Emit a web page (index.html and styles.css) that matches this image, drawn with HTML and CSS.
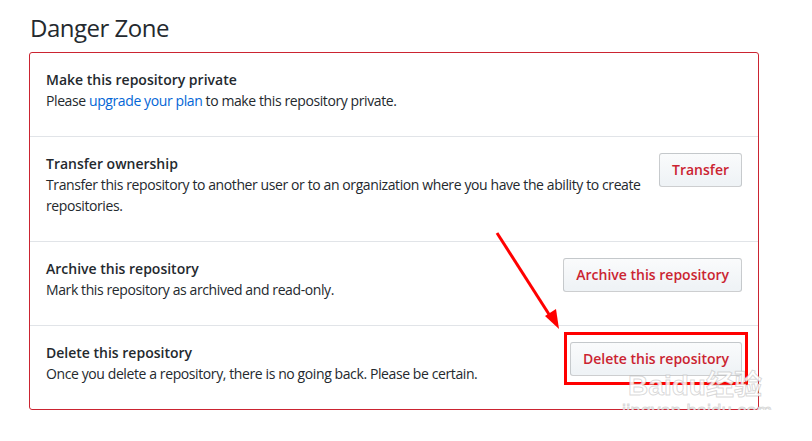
FILE: index.html
```html
<!DOCTYPE html>
<html>
<head>
    <meta charset="utf-8">
    <title>Danger Zone</title>
    <link rel="stylesheet" href="styles.css">
</head>
<body>

    <div class="page">
        <h2 class="subhead">Danger Zone</h2>

        <div class="danger-box">
            <div class="box-row">
                <strong class="row-title">Make this repository private</strong>
                <p class="row-desc">Please <a href="#">upgrade your plan</a> to make this repository private.</p>
            </div>

            <div class="box-row">
                <button class="btn-danger">Transfer</button>
                <strong class="row-title">Transfer ownership</strong>
                <p class="row-desc">Transfer this repository to another user or to an organization where you have the ability to create repositories.</p>
            </div>

            <div class="box-row">
                <button class="btn-danger">Archive this repository</button>
                <strong class="row-title">Archive this repository</strong>
                <p class="row-desc">Mark this repository as archived and read-only.</p>
            </div>

            <div class="box-row">
                <span class="highlight">
                    <button class="btn-danger">Delete this repository</button>
                </span>
                <strong class="row-title">Delete this repository</strong>
                <p class="row-desc">Once you delete a repository, there is no going back. Please be certain.</p>
            </div>
        </div>
    </div>

    <!-- annotation arrow -->
    <svg class="arrow" width="812" height="441" viewBox="0 0 812 441">
        <line x1="497" y1="233" x2="552" y2="319" stroke="#ff0000" stroke-width="3"/>
        <polygon points="559,329 545,316 556,309" fill="#ff0000"/>
    </svg>

    <!-- watermark -->
    <div class="watermark">
        <div class="wm-logo">Baidu经验</div>
        <div class="wm-url">jingyan.baidu.com</div>
    </div>

</body>
</html>
```

FILE: styles.css
```css
* {
    margin: 0;
    padding: 0;
    box-sizing: border-box;
}

body {
    font-family: "Open Sans", "Noto Sans", Arial, sans-serif;
    font-size: 14px;
    line-height: 1.5;
    color: #24292e;
    background: #fff;
    position: relative;
}

.page {
    width: 759px;
    padding: 13px 0 0 29px;
}

.subhead {
    font-size: 24px;
    font-weight: 400;
    line-height: 1.25;
    letter-spacing: -0.5px;
    padding-left: 1px;
    margin-bottom: 9px;
}

.danger-box {
    border: 1px solid #cb2431;
    border-radius: 3px;
}

.box-row {
    padding: 16px 16px 25px;
    border-top: 1px solid #e1e4e8;
}

.box-row:first-child {
    border-top: none;
}

.row-title {
    display: block;
    font-weight: 600;
}

.row-desc {
    padding-right: 90px;
    letter-spacing: -0.4px;
}

.row-desc a {
    color: #0366d6;
    text-decoration: none;
}

.btn-danger {
    float: right;
    font-family: inherit;
    font-size: 14px;
    font-weight: 600;
    line-height: 20px;
    padding: 6px 12px;
    color: #cb2431;
    background: linear-gradient(-180deg, #fafbfc 0%, #eff3f6 90%);
    border: 1px solid rgba(27,31,35,0.2);
    border-radius: 3px;
    cursor: pointer;
}

.highlight {
    float: right;
    margin: -10px -6px 0 0;
    padding: 7px 3px 6px;
    border: 3px solid #ff0000;
}

.arrow {
    position: absolute;
    top: 0;
    left: 0;
    pointer-events: none;
}

.watermark {
    position: absolute;
    left: 622px;
    top: 372px;
    width: 146px;
    color: rgba(255,255,255,0.85);
    -webkit-text-stroke: 1px rgba(170,170,170,0.45);
    pointer-events: none;
    text-align: center;
}

.wm-logo {
    font-family: "Liberation Sans", "Noto Sans CJK SC", sans-serif;
    font-size: 28px;
    font-weight: 700;
    line-height: 28px;
}

.wm-url {
    font-family: "Liberation Sans", sans-serif;
    font-size: 18px;
    line-height: 22px;
    letter-spacing: 0.3px;
}
```
